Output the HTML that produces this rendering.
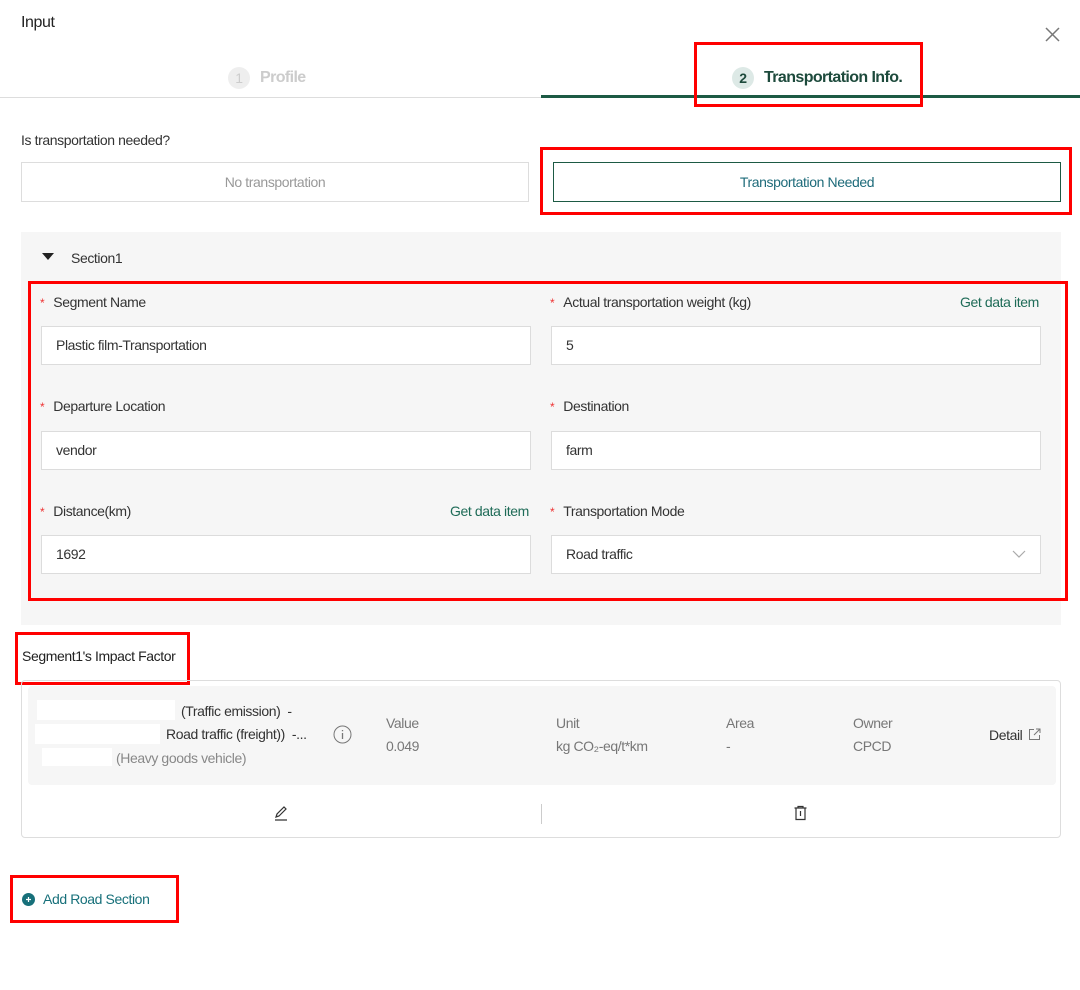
<!DOCTYPE html>
<html><head><meta charset="utf-8"><style>
*{box-sizing:border-box;margin:0;padding:0}
body{width:1080px;height:990px;background:#fff;font-family:"Liberation Sans",sans-serif;font-size:14px;letter-spacing:-0.4px;color:#333;position:relative;overflow:hidden}
.a{position:absolute;white-space:nowrap}
.red{position:absolute;border:3px solid #f00}
.inp{position:absolute;height:39px;border:1px solid #dcdcdc;background:#fff;padding-left:14px;line-height:37px;font-size:14px;color:#333}
.lbl{position:absolute;font-size:14px;color:#333;white-space:nowrap}
.lbl b{color:#e33;font-weight:normal;margin-right:9px;font-size:12px}
.link{position:absolute;color:#1e6b57;font-size:14px;white-space:nowrap}
.g{color:#777}
</style></head><body>
<div class="a" style="left:21px;top:14px;font-size:16px;color:#222">Input</div>
<svg class="a" style="left:1045px;top:27px" width="15" height="15" viewBox="0 0 15 15"><path d="M1 1L14 14M14 1L1 14" stroke="#777" stroke-width="1.5"/></svg>
<div class="a" style="left:0;top:97px;width:1080px;height:1px;background:#ddd"></div>
<div class="a" style="left:541px;top:95px;width:539px;height:3px;background:#1d5a44"></div>
<div class="a" style="left:228px;top:67px;width:22px;height:22px;border-radius:50%;background:#eee;color:#ccc;text-align:center;line-height:22px;font-size:14px">1</div>
<div class="a" style="left:260px;top:69px;font-size:16px;color:#ccc;font-weight:bold;letter-spacing:-0.6px">Profile</div>
<div class="a" style="left:732px;top:67px;width:22px;height:22px;border-radius:50%;background:#dde9e6;color:#1d4a3c;text-align:center;line-height:22px;font-size:14px;font-weight:bold">2</div>
<div class="a" style="left:764px;top:69px;font-size:16px;color:#1d4a3c;font-weight:bold;letter-spacing:-0.6px">Transportation Info.</div>
<div class="red" style="left:694px;top:42px;width:229px;height:65px"></div>

<div class="a" style="left:21px;top:132px;font-size:14px">Is transportation needed?</div>
<div class="a" style="left:21px;top:162px;width:508px;height:40px;border:1px solid #ddd;text-align:center;line-height:38px;color:#999">No transportation</div>
<div class="a" style="left:553px;top:162px;width:508px;height:40px;border:1px solid #1d5a44;text-align:center;line-height:38px;color:#1e6b7a">Transportation Needed</div>
<div class="red" style="left:540px;top:147px;width:532px;height:68px"></div>

<div class="a" style="left:21px;top:232px;width:1040px;height:393px;background:#f6f6f6"></div>
<svg class="a" style="left:42px;top:253px" width="12" height="8"><path d="M0 0H12L6 7Z" fill="#222"/></svg>
<div class="a" style="left:71px;top:250px">Section1</div>

<div class="lbl" style="left:40px;top:294px"><b>*</b>Segment Name</div>
<div class="inp" style="left:41px;top:326px;width:490px">Plastic film-Transportation</div>
<div class="lbl" style="left:550px;top:294px"><b>*</b>Actual transportation weight (kg)</div>
<div class="link" style="left:960px;top:294px">Get data item</div>
<div class="inp" style="left:551px;top:326px;width:490px">5</div>
<div class="lbl" style="left:40px;top:398px"><b>*</b>Departure Location</div>
<div class="inp" style="left:41px;top:431px;width:490px">vendor</div>
<div class="lbl" style="left:550px;top:398px"><b>*</b>Destination</div>
<div class="inp" style="left:551px;top:431px;width:490px">farm</div>
<div class="lbl" style="left:40px;top:503px"><b>*</b>Distance(km)</div>
<div class="link" style="left:450px;top:503px">Get data item</div>
<div class="inp" style="left:41px;top:535px;width:490px">1692</div>
<div class="lbl" style="left:550px;top:503px"><b>*</b>Transportation Mode</div>
<div class="inp" style="left:551px;top:535px;width:490px">Road traffic</div>
<svg class="a" style="left:1012px;top:549px" width="14" height="10"><path d="M1 2L7 8L13 2" stroke="#aaa" fill="none" stroke-width="1.2"/></svg>
<div class="red" style="left:28px;top:281px;width:1040px;height:320px"></div>

<div class="a" style="left:22px;top:648px;font-size:14px;color:#222">Segment1's Impact Factor</div>
<div class="red" style="left:15px;top:632px;width:175px;height:53px"></div>
<div class="a" style="left:21px;top:680px;width:1040px;height:158px;border:1px solid #ddd;border-radius:4px"></div>
<div class="a" style="left:28px;top:686px;width:1028px;height:99px;background:#f6f6f6;border-radius:4px"></div>
<div class="a" style="left:37px;top:700px;width:138px;height:20px;background:#fff"></div>
<div class="a" style="left:35px;top:724px;width:125px;height:20px;background:#fff"></div>
<div class="a" style="left:42px;top:748px;width:70px;height:18px;background:#fff"></div>
<div class="a" style="left:181px;top:703px">(Traffic emission) &nbsp;-</div>
<div class="a" style="left:166px;top:726px">Road traffic (freight)) &nbsp;-...</div>
<div class="a" style="left:116px;top:750px;color:#888">(Heavy goods vehicle)</div>
<svg class="a" style="left:333px;top:725px" width="19" height="19"><circle cx="9.5" cy="9.5" r="8.5" stroke="#777" fill="none"/><path d="M9.5 8V14M9.5 5V6.3" stroke="#777" stroke-width="1.3"/></svg>
<div class="a g" style="left:386px;top:715px">Value</div><div class="a g" style="left:386px;top:738px">0.049</div>
<div class="a g" style="left:556px;top:715px">Unit</div><div class="a g" style="left:556px;top:738px">kg CO₂-eq/t*km</div>
<div class="a g" style="left:726px;top:715px">Area</div><div class="a g" style="left:726px;top:738px">-</div>
<div class="a g" style="left:853px;top:715px">Owner</div><div class="a g" style="left:853px;top:738px">CPCD</div>
<div class="a" style="left:989px;top:727px;color:#333">Detail</div>
<svg class="a" style="left:1028px;top:728px" width="13" height="13"><path d="M6 1.5H1.5V11.5H11.5V7M8 1H12V5M12 1L6 7" stroke="#777" fill="none"/></svg>
<div class="a" style="left:541px;top:804px;width:1px;height:20px;background:#ccc"></div>
<svg class="a" style="left:273px;top:805px" width="16" height="16"><path d="M3 12L4 9L11 2L13 4L6 11ZM2 15H14" stroke="#333" fill="none" stroke-width="1.2"/></svg>
<svg class="a" style="left:793px;top:805px" width="15" height="16"><path d="M1.5 3H13.5M5 3V1.5H10V3M3 3V14.5H12V3M7.5 6V11" stroke="#333" fill="none" stroke-width="1.2"/></svg>

<svg class="a" style="left:22px;top:893px" width="13" height="13"><circle cx="6.5" cy="6.5" r="6.5" fill="#17707a"/><path d="M6.5 4V9M4 6.5H9" stroke="#fff" stroke-width="1.2"/></svg>
<div class="a" style="left:43px;top:891px;color:#17707a">Add Road Section</div>
<div class="red" style="left:10px;top:875px;width:169px;height:48px"></div>
</body></html>
